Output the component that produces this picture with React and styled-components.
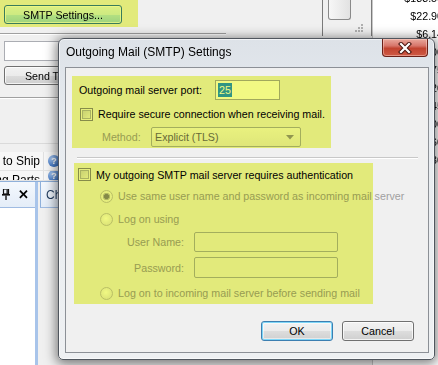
import React from "react";
import styled, { createGlobalStyle, css } from "styled-components";

const GlobalStyle = createGlobalStyle`
  html, body {
    margin: 0;
    padding: 0;
    background: #f0f0f0;
  }
  body {
    font-family: "Liberation Sans", Arial, sans-serif;
    font-size: 10.7px;
    color: #000;
  }
`;

const Screen = styled.div`
  position: relative;
  width: 438px;
  height: 365px;
  overflow: hidden;
  background: #f0f0f0;
`;

const AppArea = styled.div`
  display: flex;
  height: 100%;
`;

// yellow marker drawn over the content (multiply, like a highlighter pen)
const Marker = styled.div`
  position: relative;
  box-sizing: border-box;
  &::after {
    content: "";
    position: absolute;
    inset: 0;
    background: #f1f983;
    mix-blend-mode: multiply;
    pointer-events: none;
  }
`;

/* ---------- background application ---------- */

const LeftPane = styled.div`
  flex: 0 0 322px;
  display: flex;
  flex-direction: column;
`;

const Toolbar = styled.div`
  height: 33px;
`;

const ToolMarker = styled(Marker)`
  width: 138px;
  height: 27px;
  padding: 5px 0 0 4px;
`;

const WinButton = styled.button`
  box-sizing: border-box;
  width: ${(p) => p.$w}px;
  height: ${(p) => p.$h || 20}px;
  padding: 0;
  border: 1px solid #707070;
  border-radius: 3px;
  font: inherit;
  color: #000;
  text-align: center;
  background: linear-gradient(#f2f2f2 0%, #ebebeb 50%, #dddddd 51%, #cfcfcf 100%);
  box-shadow: inset 0 0 0 1px rgba(255, 255, 255, 0.75);
  ${(p) =>
    p.$hot &&
    css`
      border-color: #3c7fb1;
      background: linear-gradient(#eaf6fd 0%, #d9f0fc 50%, #bee6fd 51%, #a7d9f5 100%);
    `}
  ${(p) =>
    p.$default &&
    css`
      border-color: #3c7fb1;
      box-shadow: inset 0 0 0 1px #7fd6f7, inset 0 0 0 2px rgba(255, 255, 255, 0.5);
    `}
`;

const Rule = styled.div`
  width: ${(p) => p.$w}px;
  height: 1px;
  background: #a0a0a0;
  border-bottom: 1px solid #fff;
  margin-top: ${(p) => p.$mt || 0}px;
`;

const TextBox = styled.div`
  box-sizing: border-box;
  width: 150px;
  height: 20px;
  margin: 6px 0 0 4px;
  border: 1px solid #abadb3;
  background: #fff;
`;

const SendButton = styled(WinButton)`
  margin: 5px 0 0 4px;
`;

const Table = styled.div`
  margin-top: 44px;
  border-top: 1px solid #dadada;
  padding-top: 8px;
`;

const TableRow = styled.div`
  display: flex;
  height: ${(p) => p.$h}px;
  overflow: hidden;
  background: #f7f7f7;
  border-bottom: 1px solid #e4e4e4;
`;

const NameCell = styled.div`
  flex: 0 0 40px;
  display: flex;
  justify-content: flex-end;
  overflow: hidden;
  white-space: nowrap;
  font-size: 12px;
  line-height: 18px;
  padding-right: 3px;
  border-right: 1px solid #e0e0e0;
`;

const HelpCell = styled.div`
  flex: 0 0 20px;
  display: flex;
  align-items: center;
  padding-left: 4px;
`;

const HelpIcon = styled.span`
  width: 12px;
  height: 12px;
  border-radius: 50%;
  background: radial-gradient(circle at 35% 30%, #a9c8f0, #3d74c4 70%);
  color: #fff;
  font-size: 9px;
  font-weight: bold;
  line-height: 12px;
  text-align: center;
`;

const Dock = styled.div`
  flex: 1;
  display: flex;
  border-top: 1px solid #8fb0da;
`;

const DockLeft = styled.div`
  flex: 0 0 35px;
  display: flex;
  flex-direction: column;
  border-right: 3px solid #a8c4ea;
`;

const DockHeader = styled.div`
  height: 25px;
  display: flex;
  align-items: center;
  gap: 8px;
  padding-left: 2px;
  background: linear-gradient(#f4f8fd, #e4edf8);
  border-bottom: 1px solid #9fbbe2;
`;

const DockClose = styled.span`
  font-size: 13px;
  font-weight: bold;
`;

const DockBody = styled.div`
  flex: 1;
  background: #fff;
`;

const DockRight = styled.div`
  flex: 1;
  display: flex;
  flex-direction: column;
  padding-left: 2px;
`;

const DockTab = styled.div`
  height: 25px;
  padding-left: 5px;
  display: flex;
  align-items: center;
  white-space: nowrap;
  font-size: 12px;
  color: #1e395b;
  background: linear-gradient(#f4f8fd, #e4edf8);
  border-left: 1px solid #8fb0da;
  border-bottom: 1px solid #9fbbe2;
`;

const MidPane = styled.div`
  flex: 0 0 50px;
`;

const ScrollArea = styled.div`
  position: relative;
  height: 36px;
  border-left: 1px solid #7b7b7b;
  border-right: 1px solid #7b7b7b;
  box-sizing: border-box;
  padding-left: 5px;
`;

const Thumb = styled.div`
  width: 23px;
  height: 20px;
  box-sizing: border-box;
  border: 1px solid #8a8a8a;
  border-top: none;
  border-radius: 0 0 3px 3px;
  background: linear-gradient(90deg, #f7f7f7, #e2e2e2);
`;

const Grip = styled.svg`
  position: absolute;
  right: 8px;
  bottom: 4px;
`;

const PricePane = styled.div`
  flex: 0 0 72px;
  background: #fff;
  border-left: 1px solid #c8c8c8;
  overflow: hidden;
`;

const PriceRow = styled.div`
  height: 18px;
  line-height: 18px;
  text-align: right;
  padding-right: 2px;
  &:first-child {
    margin-top: -11px;
  }
`;

/* ---------- dialog ---------- */

const Dialog = styled.div`
  position: absolute;
  left: 58px;
  top: 38px;
  width: 377px;
  height: 322px;
  box-sizing: border-box;
  display: flex;
  flex-direction: column;
  padding: 0 5px 6px 6px;
  border: 1px solid #50565e;
  border-radius: 6px 6px 5px 5px;
  background: linear-gradient(180deg, #dde2e8 0%, #e8ecf0 30%, #eef0f2 100%);
  box-shadow: 0 2px 12px 2px rgba(0, 0, 0, 0.5), inset 0 0 0 1px rgba(255, 255, 255, 0.6);
`;

const TitleBar = styled.div`
  height: 28px;
  flex: none;
  display: flex;
  justify-content: space-between;
  align-items: flex-start;
`;

const Title = styled.div`
  margin: 6px 0 0 1px;
  font-size: 12px;
  line-height: 15px;
`;

const CloseButton = styled.div`
  width: 46px;
  height: 18px;
  margin-right: 1px;
  box-sizing: border-box;
  border: 1px solid #6b2018;
  border-top: none;
  border-radius: 0 0 4px 4px;
  display: flex;
  align-items: center;
  justify-content: center;
  background: linear-gradient(#e9a99c 0%, #d7766a 40%, #c1432f 55%, #cf5a45 100%);
  box-shadow: inset 0 0 0 1px rgba(255, 220, 210, 0.45);
`;

const Client = styled.div`
  flex: 1;
  display: flex;
  flex-direction: column;
  border: 1px solid #8c9096;
  background: #f0f0f0;
`;

const PortMarker = styled(Marker)`
  margin: 8px 0 0 6px;
  width: 259px;
  height: 72px;
  padding: 4px 0 0 7px;
`;

const AuthMarker = styled(Marker)`
  margin: 4px 0 0 8px;
  width: 299px;
  height: 141px;
  padding-left: 4px;
`;

const Row = styled.div`
  display: flex;
  align-items: center;
  height: ${(p) => p.$h}px;
  margin-top: ${(p) => p.$mt || 0}px;
  padding-left: ${(p) => p.$indent || 0}px;
  gap: ${(p) => (p.$gap === undefined ? 5 : p.$gap)}px;
  white-space: nowrap;
  color: ${(p) => (p.$off ? "#a0a0a0" : "#000")};
`;

const Label = styled.span`
  flex: none;
  width: ${(p) => p.$w}px;
  text-align: ${(p) => (p.$right ? "right" : "left")};
`;

const PortInput = styled.div`
  box-sizing: border-box;
  width: 65px;
  height: 20px;
  padding-left: 2px;
  display: flex;
  align-items: center;
  border: 1px solid #abadb3;
  background: #fff;
`;

const Selection = styled.span`
  background: #3399ff;
  color: #fff;
  padding: 1px;
`;

const CheckBox = styled.span`
  flex: none;
  width: 13px;
  height: 13px;
  box-sizing: border-box;
  border: 1px solid #8e8f8f;
  background: linear-gradient(135deg, #cdd1d6 0%, #f6f6f6 100%);
  box-shadow: inset 0 0 0 1px #f4f4f4, inset 0 0 0 2px #b3b7bc;
`;

const Radio = styled.span`
  flex: none;
  width: 13px;
  height: 13px;
  box-sizing: border-box;
  border-radius: 50%;
  border: 1px solid #c4c4c4;
  background: radial-gradient(circle at 45% 40%, #ffffff 0%, #e8e8e8 80%);
  ${(p) =>
    p.$checked &&
    css`
      background: radial-gradient(circle, #8c8c8c 0 2.2px, #bdbdbd 2.8px 3.4px, #f3f3f3 4px);
    `}
`;

const Combo = styled.div`
  box-sizing: border-box;
  width: 150px;
  height: 20px;
  display: flex;
  align-items: center;
  justify-content: space-between;
  padding: 0 6px 0 3px;
  border: 1px solid #adb2b5;
  border-radius: 2px;
  background: linear-gradient(#f7f7f7, #ececec);
  color: #6d6d6d;
`;

const Field = styled.div`
  box-sizing: border-box;
  width: 144px;
  height: ${(p) => p.$h}px;
  border: 1px solid #adb2b5;
  border-radius: 2px;
  background: #f0f0f0;
`;

const Separator = styled.div`
  margin: 9px 10px 0 11px;
  border-top: 1px solid #c8c8c8;
  border-bottom: 1px solid #fff;
`;

const ButtonRow = styled.div`
  display: flex;
  justify-content: flex-end;
  gap: 9px;
  margin-top: 17px;
  padding-right: 14px;
`;

function PinIcon() {
  return (
    <svg width="8" height="11" viewBox="0 0 8 11">
      <rect x="0" y="5" width="8" height="1.6" fill="#111" />
      <rect x="1.5" y="0" width="5" height="5" fill="none" stroke="#111" strokeWidth="1.2" />
      <rect x="4.5" y="0.5" width="1.3" height="4.5" fill="#111" />
      <rect x="3.3" y="6.5" width="1.4" height="4.5" fill="#111" />
    </svg>
  );
}

function CloseX() {
  return (
    <svg width="14" height="12" viewBox="0 0 14 12">
      <path d="M3 2 L11 10 M11 2 L3 10" stroke="#4a1610" strokeWidth="4.2" strokeLinecap="square" />
      <path d="M3 2 L11 10 M11 2 L3 10" stroke="#fff" strokeWidth="2.2" strokeLinecap="square" />
    </svg>
  );
}

function Arrow() {
  return (
    <svg width="8" height="5" viewBox="0 0 8 5">
      <path d="M0 0 H8 L4 4.5 Z" fill="#9a9a9a" />
    </svg>
  );
}

const prices = ["$183.50", "$22.90", "$6.14", "$14.00", "$9.75", "$31.20", "$2.45", "$48.00", "$5.60", "$12.30"];

export default function App() {
  return (
    <>
      <GlobalStyle />
      <Screen>
        <AppArea>
          <LeftPane>
            <Toolbar>
              <ToolMarker>
                <WinButton $w={118} $h={19} $hot>
                  SMTP Settings...
                </WinButton>
              </ToolMarker>
            </Toolbar>
            <Rule $w={226} />
            <TextBox />
            <SendButton $w={98} $h={19}>
              Send Test...
            </SendButton>
            <Rule $w={226} $mt={12} />
            <Table>
              <TableRow $h={18}>
                <NameCell>Ready to Ship</NameCell>
                <HelpCell>
                  <HelpIcon>?</HelpIcon>
                </HelpCell>
              </TableRow>
              <TableRow $h={9}>
                <NameCell>Missing Parts</NameCell>
                <HelpCell>
                  <HelpIcon>?</HelpIcon>
                </HelpCell>
              </TableRow>
            </Table>
            <Dock>
              <DockLeft>
                <DockHeader>
                  <PinIcon />
                  <DockClose>✕</DockClose>
                </DockHeader>
                <DockBody />
              </DockLeft>
              <DockRight>
                <DockTab>Changes</DockTab>
              </DockRight>
            </Dock>
          </LeftPane>
          <MidPane>
            <ScrollArea>
              <Thumb />
              <Grip width="8" height="8" viewBox="0 0 8 8">
                <rect x="6" y="0" width="2" height="2" fill="#b0b0b0" />
                <rect x="3" y="3" width="2" height="2" fill="#b0b0b0" />
                <rect x="6" y="3" width="2" height="2" fill="#b0b0b0" />
                <rect x="0" y="6" width="2" height="2" fill="#b0b0b0" />
                <rect x="3" y="6" width="2" height="2" fill="#b0b0b0" />
                <rect x="6" y="6" width="2" height="2" fill="#b0b0b0" />
              </Grip>
            </ScrollArea>
          </MidPane>
          <PricePane>
            {prices.map((p) => (
              <PriceRow key={p}>{p}</PriceRow>
            ))}
          </PricePane>
        </AppArea>

        <Dialog>
          <TitleBar>
            <Title>Outgoing Mail (SMTP) Settings</Title>
            <CloseButton>
              <CloseX />
            </CloseButton>
          </TitleBar>
          <Client>
            <PortMarker>
              <Row $h={20} $gap={0}>
                <Label $w={136}>Outgoing mail server port:</Label>
                <PortInput>
                  <Selection>25</Selection>
                </PortInput>
              </Row>
              <Row $h={14} $mt={7} $indent={1}>
                <CheckBox />
                <span>Require secure connection when receiving mail.</span>
              </Row>
              <Row $h={20} $mt={6} $indent={23} $gap={0} $off>
                <Label $w={49}>Method:</Label>
                <Combo>
                  <span>Explicit (TLS)</span>
                  <Arrow />
                </Combo>
              </Row>
            </PortMarker>
            <Separator />
            <AuthMarker>
              <Row $h={13} $mt={5}>
                <CheckBox />
                <span>My outgoing SMTP mail server requires authentication</span>
              </Row>
              <Row $h={14} $mt={8} $indent={22} $off>
                <Radio $checked />
                <span>Use same user name and password as incoming mail server</span>
              </Row>
              <Row $h={14} $mt={9} $indent={22} $off>
                <Radio />
                <span>Log on using</span>
              </Row>
              <Row $h={20} $mt={6} $indent={22} $gap={10} $off>
                <Label $w={84} $right>
                  User Name:
                </Label>
                <Field $h={20} />
              </Row>
              <Row $h={21} $mt={5} $indent={22} $gap={10} $off>
                <Label $w={84} $right>
                  Password:
                </Label>
                <Field $h={21} />
              </Row>
              <Row $h={14} $mt={8} $indent={22} $off>
                <Radio />
                <span>Log on to incoming mail server before sending mail</span>
              </Row>
            </AuthMarker>
            <ButtonRow>
              <WinButton $w={72} $h={20} $default>
                OK
              </WinButton>
              <WinButton $w={72} $h={20}>
                Cancel
              </WinButton>
            </ButtonRow>
          </Client>
        </Dialog>
      </Screen>
    </>
  );
}
